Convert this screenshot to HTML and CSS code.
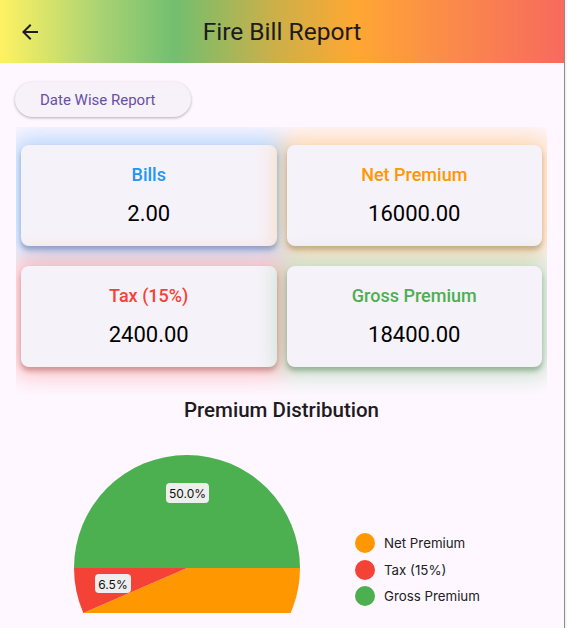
FILE: index.html
```html
<!DOCTYPE html>
<html lang="en">
<head>
    <meta charset="UTF-8">
    <meta name="viewport" content="width=device-width, initial-scale=1.0">
    <title>Fire Bill Report</title>
    <link rel="stylesheet" href="styles.css">
</head>
<body>
<div class="app">
    <header class="topbar">
        <button class="back" aria-label="Back">
            <svg width="24" height="24" viewBox="0 0 24 24"><path d="M20 11H7.83l5.59-5.59L12 4l-8 8 8 8 1.41-1.41L7.83 13H20v-2z" fill="#1d1b20"/></svg>
        </button>
        <h1>Fire Bill Report</h1>
        <span></span>
    </header>

    <main class="content">
        <button class="date-btn">Date Wise Report</button>

        <div class="stats">
            <div class="card card-blue">
                <div class="label">Bills</div>
                <div class="value">2.00</div>
            </div>
            <div class="card card-orange">
                <div class="label">Net Premium</div>
                <div class="value">16000.00</div>
            </div>
            <div class="card card-red">
                <div class="label">Tax (15%)</div>
                <div class="value">2400.00</div>
            </div>
            <div class="card card-green">
                <div class="label">Gross Premium</div>
                <div class="value">18400.00</div>
            </div>
        </div>

        <h2 class="chart-title">Premium Distribution</h2>

        <div class="chart">
            <svg class="pie" width="226" height="226" viewBox="0 0 226 226">
                <path d="M113 113 L226 113 A113 113 0 0 1 9.3 157.9 Z" fill="#ff9800"/>
                <path d="M113 113 L9.3 157.9 A113 113 0 0 1 0 113 Z" fill="#f44336"/>
                <path d="M113 113 L0 113 A113 113 0 0 1 226 113 Z" fill="#4caf50"/>
                <rect x="92" y="28" width="43" height="20" rx="4" fill="#eeeeee"/>
                <text x="113.5" y="43" text-anchor="middle" class="pie-label">50.0%</text>
                <rect x="21" y="119" width="36" height="19" rx="4" fill="#eeeeee"/>
                <text x="39" y="134" text-anchor="middle" class="pie-label">6.5%</text>
            </svg>
            <ul class="legend">
                <li><span class="dot" style="background:#ff9800"></span>Net Premium</li>
                <li><span class="dot" style="background:#f44336"></span>Tax (15%)</li>
                <li><span class="dot" style="background:#4caf50"></span>Gross Premium</li>
            </ul>
        </div>
    </main>
</div>
</body>
</html>
```

FILE: styles.css
```css
body {
    margin: 0;
    padding: 0;
    background: #f3f3f3;
    font-family: Roboto, "Noto Sans", sans-serif;
}
.app {
    width: 564px;
    height: 628px;
    background: #fef7ff;
    border-right: 1px solid #8c8c8c;
    overflow: hidden;
}
.topbar {
    height: 63px;
    display: grid;
    grid-template-columns: 60px 1fr 60px;
    align-items: center;
    background: linear-gradient(to right, #fff263 0%, #a9d273 18%, #72bf6f 31%, #c9b04a 48%, #ffa733 63%, #fb8a4a 80%, #f76a5d 100%);
}
.back {
    border: none;
    background: none;
    padding: 0;
    margin-left: 18px;
    width: 24px;
    height: 24px;
    display: flex;
}
.topbar h1 {
    margin: 0;
    text-align: center;
    font-size: 24.5px;
    font-weight: 400;
    color: #1d1b20;
}
.content {
    padding: 19px 17px 0 16px;
}
.date-btn {
    display: block;
    height: 35px;
    width: 176px;
    margin-left: -1px;
    padding: 0 0 0 25px;
    text-align: left;
    border: none;
    border-radius: 18px;
    background: #f7f2fa;
    color: #6750a4;
    font-family: Roboto, sans-serif;
    font-size: 15px;
    box-shadow: 0 1px 3px rgba(0, 0, 0, 0.3);
}
.stats {
    margin-top: 10px;
    padding: 18px 5px 28px;
    display: grid;
    grid-template-columns: 1fr 1fr;
    column-gap: 10px;
    row-gap: 20px;
    overflow: hidden;
}
.card {
    height: 101px;
    background: #f6f2f9;
    border-radius: 8px;
    text-align: center;
}
.card-blue {
    box-shadow: 0 4px 5px rgba(60, 100, 160, 0.45), 0 0 22px 9px rgba(33, 150, 243, 0.3);
}
.card-orange {
    box-shadow: 0 4px 5px rgba(150, 110, 60, 0.45), 0 0 22px 9px rgba(255, 152, 0, 0.3);
}
.card-red {
    box-shadow: 0 4px 5px rgba(160, 80, 80, 0.45), 0 0 22px 9px rgba(244, 67, 54, 0.3);
}
.card-green {
    box-shadow: 0 4px 5px rgba(80, 120, 80, 0.45), 0 0 22px 9px rgba(76, 175, 80, 0.3);
}
.label {
    padding-top: 19px;
    font-size: 18px;
    font-weight: 500;
    line-height: 22px;
}
.card-blue .label { color: #2196f3; }
.card-orange .label { color: #ff9800; }
.card-red .label { color: #f44336; }
.card-green .label { color: #4caf50; }
.value {
    margin-top: 14px;
    font-size: 22px;
    line-height: 28px;
    color: #000;
}
.chart-title {
    margin: 3px 0 0;
    text-align: center;
    font-size: 20.5px;
    font-weight: 500;
    line-height: 24px;
    color: #1d1b20;
}
.chart {
    height: 191px;
    display: flex;
    align-items: flex-start;
    padding-left: 58px;
    overflow: hidden;
}
.pie {
    margin-top: 33px;
    flex: none;
}
.pie-label {
    font-family: Inter, sans-serif;
    font-size: 12px;
    fill: #111;
}
.legend {
    list-style: none;
    margin: 108px 0 0 55px;
    padding: 0;
}
.legend li {
    display: flex;
    align-items: center;
    height: 26.5px;
    font-family: Inter, sans-serif;
    font-size: 13.3px;
    color: #222;
}
.dot {
    width: 20px;
    height: 20px;
    border-radius: 50%;
    margin-right: 9px;
}
```
